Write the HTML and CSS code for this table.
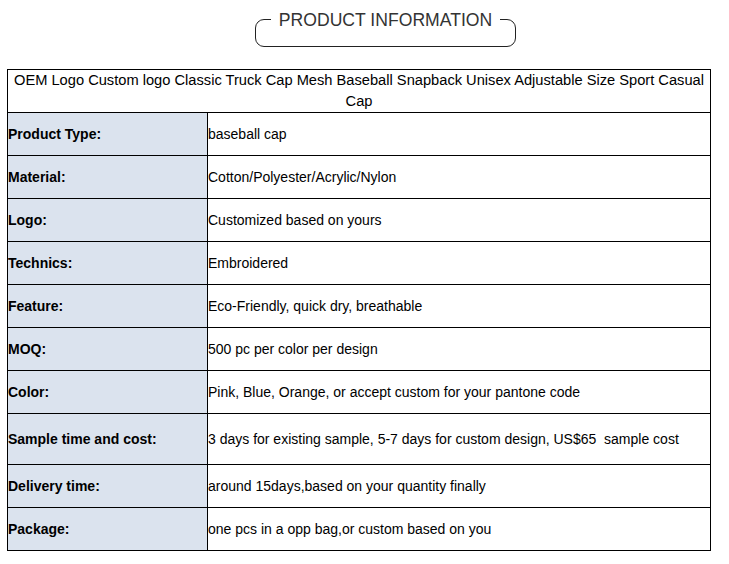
FILE: index.html
```html
<!DOCTYPE html>
<html>
<head>
<meta charset="utf-8">
<link rel="stylesheet" href="styles.css">
</head>
<body>
<div class="page">
  <fieldset class="heading">
    <legend class="heading-text">PRODUCT INFORMATION</legend>
  </fieldset>
  <table class="spec">
    <colgroup>
      <col class="col-label">
      <col class="col-value">
    </colgroup>
    <tr class="row-title">
      <td class="title" colspan="2">OEM Logo Custom logo Classic Truck Cap Mesh Baseball Snapback Unisex Adjustable Size Sport Casual Cap</td>
    </tr>
    <tr class="row"><td class="label">Product Type:</td><td class="value">baseball cap</td></tr>
    <tr class="row"><td class="label">Material:</td><td class="value">Cotton/Polyester/Acrylic/Nylon</td></tr>
    <tr class="row"><td class="label">Logo:</td><td class="value">Customized based on yours</td></tr>
    <tr class="row"><td class="label">Technics:</td><td class="value">Embroidered</td></tr>
    <tr class="row"><td class="label">Feature:</td><td class="value">Eco-Friendly, quick dry, breathable</td></tr>
    <tr class="row"><td class="label">MOQ:</td><td class="value">500 pc per color per design</td></tr>
    <tr class="row"><td class="label">Color:</td><td class="value">Pink, Blue, Orange, or accept custom for your pantone code</td></tr>
    <tr class="row row-tall"><td class="label">Sample time and cost:</td><td class="value">3 days for existing sample, 5-7 days for custom design, US$65&nbsp; sample cost</td></tr>
    <tr class="row"><td class="label">Delivery time:</td><td class="value">around 15days,based on your quantity finally</td></tr>
    <tr class="row"><td class="label">Package:</td><td class="value">one pcs in a opp bag,or custom based on you</td></tr>
  </table>
</div>
</body>
</html>
```

FILE: styles.css
```css
html, body {
  margin: 0;
  padding: 0;
  background: #ffffff;
}

.page {
  font-family: Arial, "Liberation Sans", sans-serif;
  color: #000;
  padding: 9px 0 0 7px;
}

.heading {
  box-sizing: border-box;
  width: 261px;
  margin: 0 0 0 248px;
  padding: 0 0 16px 0;
  border: 1px solid #222;
  border-radius: 9px;
  min-width: 0;
}

.heading-text {
  margin: 0 auto;
  padding: 1px 8px 0;
  font-size: 17.6px;
  line-height: 20px;
  color: #333;
  white-space: nowrap;
}

.spec {
  margin-top: 22px;
  width: 704px;
  border-collapse: collapse;
  border: 1px solid #000;
  font-size: 14px;
}

.col-label {
  width: 200px;
}

.spec td {
  border: 1px solid #000;
  padding: 0;
  vertical-align: middle;
}

.row-title {
  height: 43px;
}

.title {
  text-align: center;
  font-size: 11pt;
  line-height: 21px;
  padding: 0 1px;
}

.row {
  height: 43px;
}

.row-tall {
  height: 51px;
}

.label {
  background: #dbe3ee;
  font-weight: bold;
  line-height: 18px;
  padding-bottom: 2px;
}

.value {
  line-height: 18px;
  padding-bottom: 2px;
}
```
